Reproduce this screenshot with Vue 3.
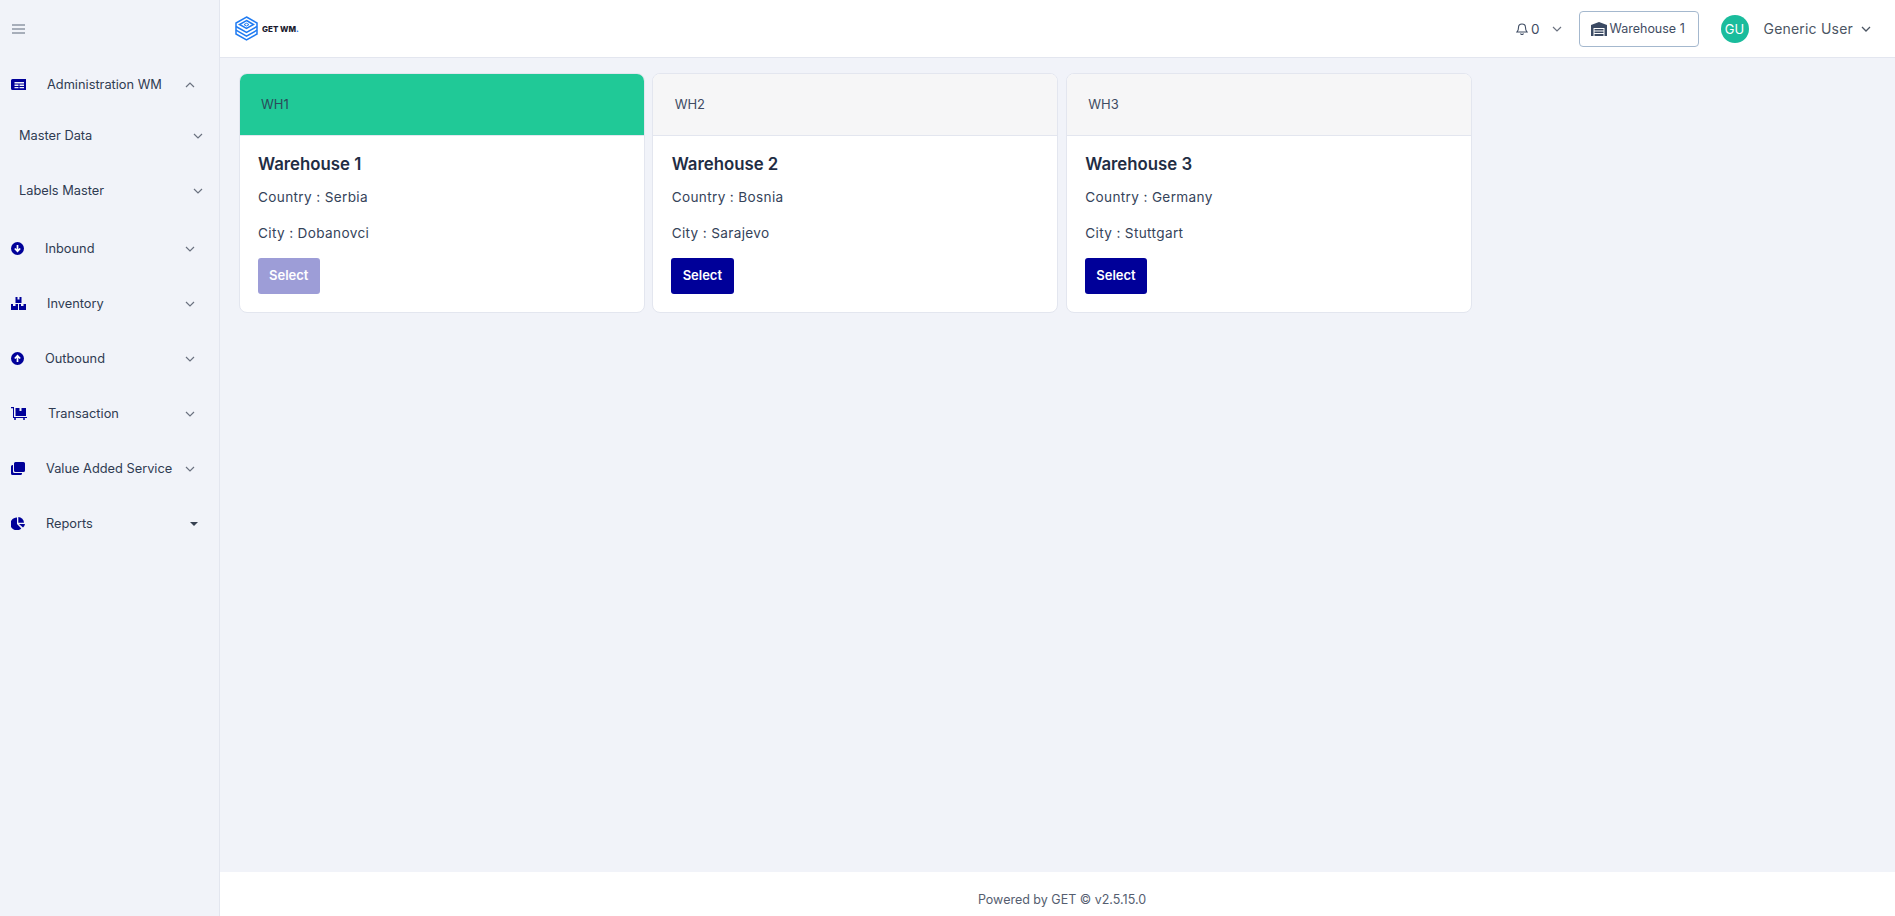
<script setup>
const menu = [
  { label: "Administration WM", icon: "admin", open: true },
  { label: "Master Data", sub: true },
  { label: "Labels Master", sub: true },
  { label: "Inbound", icon: "inbound" },
  { label: "Inventory", icon: "inventory" },
  { label: "Outbound", icon: "outbound" },
  { label: "Transaction", icon: "transaction" },
  { label: "Value Added Service", icon: "vas" },
  { label: "Reports", icon: "reports", caret: true },
];

const warehouses = [
  { code: "WH1", name: "Warehouse 1", country: "Serbia", city: "Dobanovci", active: true },
  { code: "WH2", name: "Warehouse 2", country: "Bosnia", city: "Sarajevo" },
  { code: "WH3", name: "Warehouse 3", country: "Germany", city: "Stuttgart" },
];
</script>

<template>
  <div class="layout">
    <aside class="sidebar">
      <button class="burger" aria-label="Menu">
        <svg width="13" height="10" viewBox="0 0 13 10"><path d="M0 1h13M0 5h13M0 9h13" stroke="#5f6b7c" stroke-width="1.200" fill="none" /></svg>
      </button>
      <nav class="menu">
        <div v-for="item in menu" :key="item.label" class="menu-row" :class="{ sub: item.sub }">
          <svg v-if="item.icon === 'admin'" class="icon" width="15" height="11" viewBox="0 0 15 11">
            <path fill="#000099" fill-rule="evenodd" d="M1.500 0H15v11H1.500A1.500 1.500 0 0 1 0 9.500v-8A1.500 1.500 0 0 1 1.500 0ZM3.500 3v1.500H13V3ZM3.500 5.500V7h4V5.500ZM8.500 5.500V7H13V5.500ZM3.500 8v1.300h4V8ZM8.500 8v1.300H13V8Z" />
          </svg>
          <svg v-else-if="item.icon === 'inbound'" class="icon" width="13" height="13" viewBox="0 0 13 13">
            <circle cx="6.500" cy="6.500" r="6.500" fill="#000099" />
            <path d="M6.500 3v6M3.800 6.500l2.700 2.700 2.700-2.700" stroke="#fff" stroke-width="1.700" fill="none" />
          </svg>
          <svg v-else-if="item.icon === 'inventory'" class="icon" width="15" height="13" viewBox="0 0 15 13">
            <path fill="#000099" d="M4.500 0h2v2.500h2V0h2v6h-6ZM0 7h2v2h2.500V7H7v6H0ZM8 7h2v2h2.500V7H15v6H8Z" />
          </svg>
          <svg v-else-if="item.icon === 'outbound'" class="icon" width="13" height="13" viewBox="0 0 13 13">
            <circle cx="6.500" cy="6.500" r="6.500" fill="#000099" />
            <path d="M6.500 10V4M3.800 6.500l2.700-2.700 2.700 2.700" stroke="#fff" stroke-width="1.700" fill="none" />
          </svg>
          <svg v-else-if="item.icon === 'transaction'" class="icon" width="16" height="13" viewBox="0 0 16 13">
            <path fill="#000099" d="M4.500 1h4v3h2V1H15v8H4.500ZM0 0h3v10h13v1H2V1.300H0Z" />
            <circle cx="4" cy="12" r="1" fill="#000099" />
            <circle cx="13" cy="12" r="1" fill="#000099" />
          </svg>
          <svg v-else-if="item.icon === 'vas'" class="icon" width="14" height="13" viewBox="0 0 14 13">
            <path fill="#000099" d="M4.500 0h8A1.500 1.500 0 0 1 14 1.500v7a1.500 1.500 0 0 1-1.500 1.500h-8A1.500 1.500 0 0 1 3 8.500v-7A1.500 1.500 0 0 1 4.500 0Z" />
            <path fill="#000099" d="M1.500 3H2v6.500A1.500 1.500 0 0 0 3.500 11H11v.5a1.500 1.500 0 0 1-1.500 1.500h-8A1.500 1.500 0 0 1 0 11.500v-7A1.500 1.500 0 0 1 1.500 3Z" />
          </svg>
          <svg v-else-if="item.icon === 'reports'" class="icon" width="14" height="13" viewBox="0 0 14 13">
            <path fill="#000099" d="M6 .5V7l4.300 4.400A6.400 6.400 0 1 1 6 .5Z" />
            <path fill="#000099" d="M7.300 0A6 6 0 0 1 13 5.700H7.300Z" />
            <path fill="#000099" d="M8 7h6a6.300 6.300 0 0 1-2 3.600Z" />
          </svg>
          <span class="menu-label">{{ item.label }}</span>
          <svg v-if="item.caret" class="caret" width="8" height="4" viewBox="0 0 8 4"><path d="M0 0h8L4 4Z" fill="#374151" /></svg>
          <svg v-else class="chevron" width="10" height="6" viewBox="0 0 10 6">
            <path :d="item.open ? 'M1 5l4-4 4 4' : 'M1 1l4 4 4-4'" stroke="#6b7280" stroke-width="1.200" fill="none" />
          </svg>
        </div>
      </nav>
    </aside>

    <div class="main">
      <header class="topbar">
        <div class="logo">
          <svg width="23" height="25" viewBox="0 0 23 25" fill="none" stroke="#1f7bf2" stroke-width="1.500">
            <path d="M11.500 1 22 7v11l-10.500 6L1 18V7Z" />
            <path d="M11.500 4.500 18.500 8.500l-7 4-7-4Z" />
            <path d="M11.500 7.200 14 8.600l-2.500 1.400L9 8.600Z" stroke-width="1" />
            <path d="M1 10.500l10.500 6 10.500-6" />
            <path d="M1 14.200l10.500 6 10.500-6" />
          </svg>
          <span class="logo-text">GET WM<em>.</em></span>
        </div>

        <div class="top-right">
          <svg class="bell" width="12" height="13" viewBox="0 0 12 13" fill="none" stroke="#3f4c63" stroke-width="1.100">
            <path d="M1 10c1-1 1.500-2 1.500-4.500a3.500 3.500 0 0 1 7 0C9.500 8 10 9 11 10Z" />
            <path d="M4.500 11.500a1.600 1.600 0 0 0 3 0" />
          </svg>
          <span class="count">0</span>
          <svg class="top-chevron" width="10" height="6" viewBox="0 0 10 6"><path d="M1 1l4 4 4-4" stroke="#6b7280" stroke-width="1.200" fill="none" /></svg>
          <div class="wh-button">
            <svg width="16" height="14" viewBox="0 0 16 14">
              <path fill="#3b4a63" fill-rule="evenodd" d="M8 0l8 3v11h-2.500V6h-11v8H0V3Z" />
              <path fill="#3b4a63" d="M3.500 7h9v1.500h-9ZM3.500 9.500h9V11h-9ZM3.500 12h9v2h-9Z" />
            </svg>
            <span>Warehouse 1</span>
          </div>
          <div class="avatar">GU</div>
          <span class="user">Generic User</span>
          <svg width="10" height="6" viewBox="0 0 10 6"><path d="M1 1l4 4 4-4" stroke="#4b5563" stroke-width="1.300" fill="none" /></svg>
        </div>
      </header>

      <main class="content">
        <div class="cards">
          <section v-for="wh in warehouses" :key="wh.code" class="card">
            <div class="card-header" :class="{ active: wh.active }">{{ wh.code }}</div>
            <div class="card-body">
              <h3>{{ wh.name }}</h3>
              <p>Country : {{ wh.country }}</p>
              <p>City : {{ wh.city }}</p>
              <button class="select" :disabled="wh.active">Select</button>
            </div>
          </section>
        </div>
      </main>

      <footer class="footer">Powered by GET © v2.5.15.0</footer>
    </div>
  </div>
</template>

<style>
html, body {
  margin: 0;
  height: 100%;
  background: #f1f3f9;
}
</style>

<style scoped>
.layout {
  display: flex;
  height: 916px;
  overflow: hidden;
  font-family: Inter, "Liberation Sans", sans-serif;
  color: #2d3a50;
}

.sidebar {
  width: 220px;
  flex: none;
  box-sizing: border-box;
  border-right: 1px solid #e3e6ef;
  background: #f1f3f9;
}

.burger {
  display: block;
  border: 0;
  background: none;
  padding: 0;
  margin: 24px 0 0 12px;
  height: 10px;
  line-height: 0;
}

.menu {
  margin-top: 27px;
}

.menu-row {
  display: flex;
  align-items: center;
  gap: 21px;
  height: 55px;
  padding: 0 24px 0 11px;
  font-size: 12.8px;
  color: #2f3b52;
}

.menu-row.sub {
  padding: 0 16px 0 19px;
}

.menu-row:first-child {
  height: 47px;
}

.menu-row.sub + .menu-row:not(.sub) {
  margin-top: 3px;
}

.icon,
.chevron,
.caret {
  flex: none;
}

.menu-label {
  flex: 1;
  min-width: 0;
  white-space: nowrap;
}

.menu-row .menu-label + .chevron {
  margin-left: -8px;
}

.caret {
  margin-right: -3px;
}

.main {
  flex: 1;
  min-width: 0;
  display: flex;
  flex-direction: column;
}

.topbar {
  height: 58px;
  flex: none;
  box-sizing: border-box;
  background: #fff;
  border-bottom: 1px solid #e3e6ef;
  display: flex;
  align-items: center;
  padding: 0 24px 0 15px;
}

.logo {
  display: flex;
  align-items: center;
  gap: 4px;
}

.logo-text {
  font-size: 8px;
  font-weight: 800;
  color: #1a1a2e;
}

.logo-text em {
  font-style: normal;
  color: #1f7bf2;
}

.top-right {
  margin-left: auto;
  display: flex;
  align-items: center;
  font-size: 12.5px;
  color: #3f4c63;
}

.count {
  margin-left: 3px;
  font-size: 13.5px;
}

.top-chevron {
  margin-left: 12px;
}

.wh-button {
  display: flex;
  align-items: center;
  gap: 3px;
  box-sizing: border-box;
  width: 120px;
  height: 36px;
  margin-left: 17px;
  padding-left: 11px;
  border: 1px solid #a4b8ce;
  border-radius: 4px;
  color: #3f4c63;
}

.avatar {
  width: 28px;
  height: 28px;
  margin-left: 22px;
  border-radius: 50%;
  background: #1abc9c;
  color: #fff;
  font-size: 13px;
  display: flex;
  align-items: center;
  justify-content: center;
}

.user {
  margin: 0 8px 0 15px;
  font-size: 14px;
  letter-spacing: 0.2px;
  color: #4b5563;
}

.content {
  flex: 1;
  padding: 15px 9.5px 0 18.5px;
  background: #f1f3f9;
}

.cards {
  display: grid;
  grid-template-columns: repeat(4, 1fr);
  gap: 7.5px;
  align-items: start;
}

.card {
  background: #fff;
  border: 1px solid #e3e6ef;
  border-radius: 8px;
  overflow: hidden;
}

.card-header {
  height: 62px;
  box-sizing: border-box;
  padding-left: 21.5px;
  line-height: 60px;
  font-size: 13px;
  color: #3f4c63;
  background: #f6f6f7;
  border-bottom: 1px solid #e3e6ef;
}

.card-header.active {
  background: #20c997;
  color: #2b4a5a;
}

.card-body {
  padding: 18px 18px 18px 18.5px;
}

h3 {
  margin: 0;
  font-size: 16.8px;
  font-weight: 600;
  line-height: 20px;
  color: #1f2d44;
}

p {
  margin: 0;
  font-size: 13.6px;
  letter-spacing: 0.35px;
  line-height: 20px;
  color: #35435a;
  padding-top: 16px;
}

h3 + p {
  padding-top: 13px;
}

.select {
  display: block;
  margin-top: 15px;
  margin-left: -0.5px;
  height: 36px;
  padding: 0 11.5px 2px;
  border: 0;
  border-radius: 3px;
  background: #000099;
  color: #fff;
  font-family: inherit;
  font-size: 13px;
  font-weight: 600;
}

.select:disabled {
  opacity: 0.38;
}

.footer {
  height: 44px;
  flex: none;
  box-sizing: border-box;
  background: #fff;
  padding: 20px 0 0 9px;
  text-align: center;
  font-size: 12.5px;
  line-height: 16px;
  color: #555e70;
}
</style>
